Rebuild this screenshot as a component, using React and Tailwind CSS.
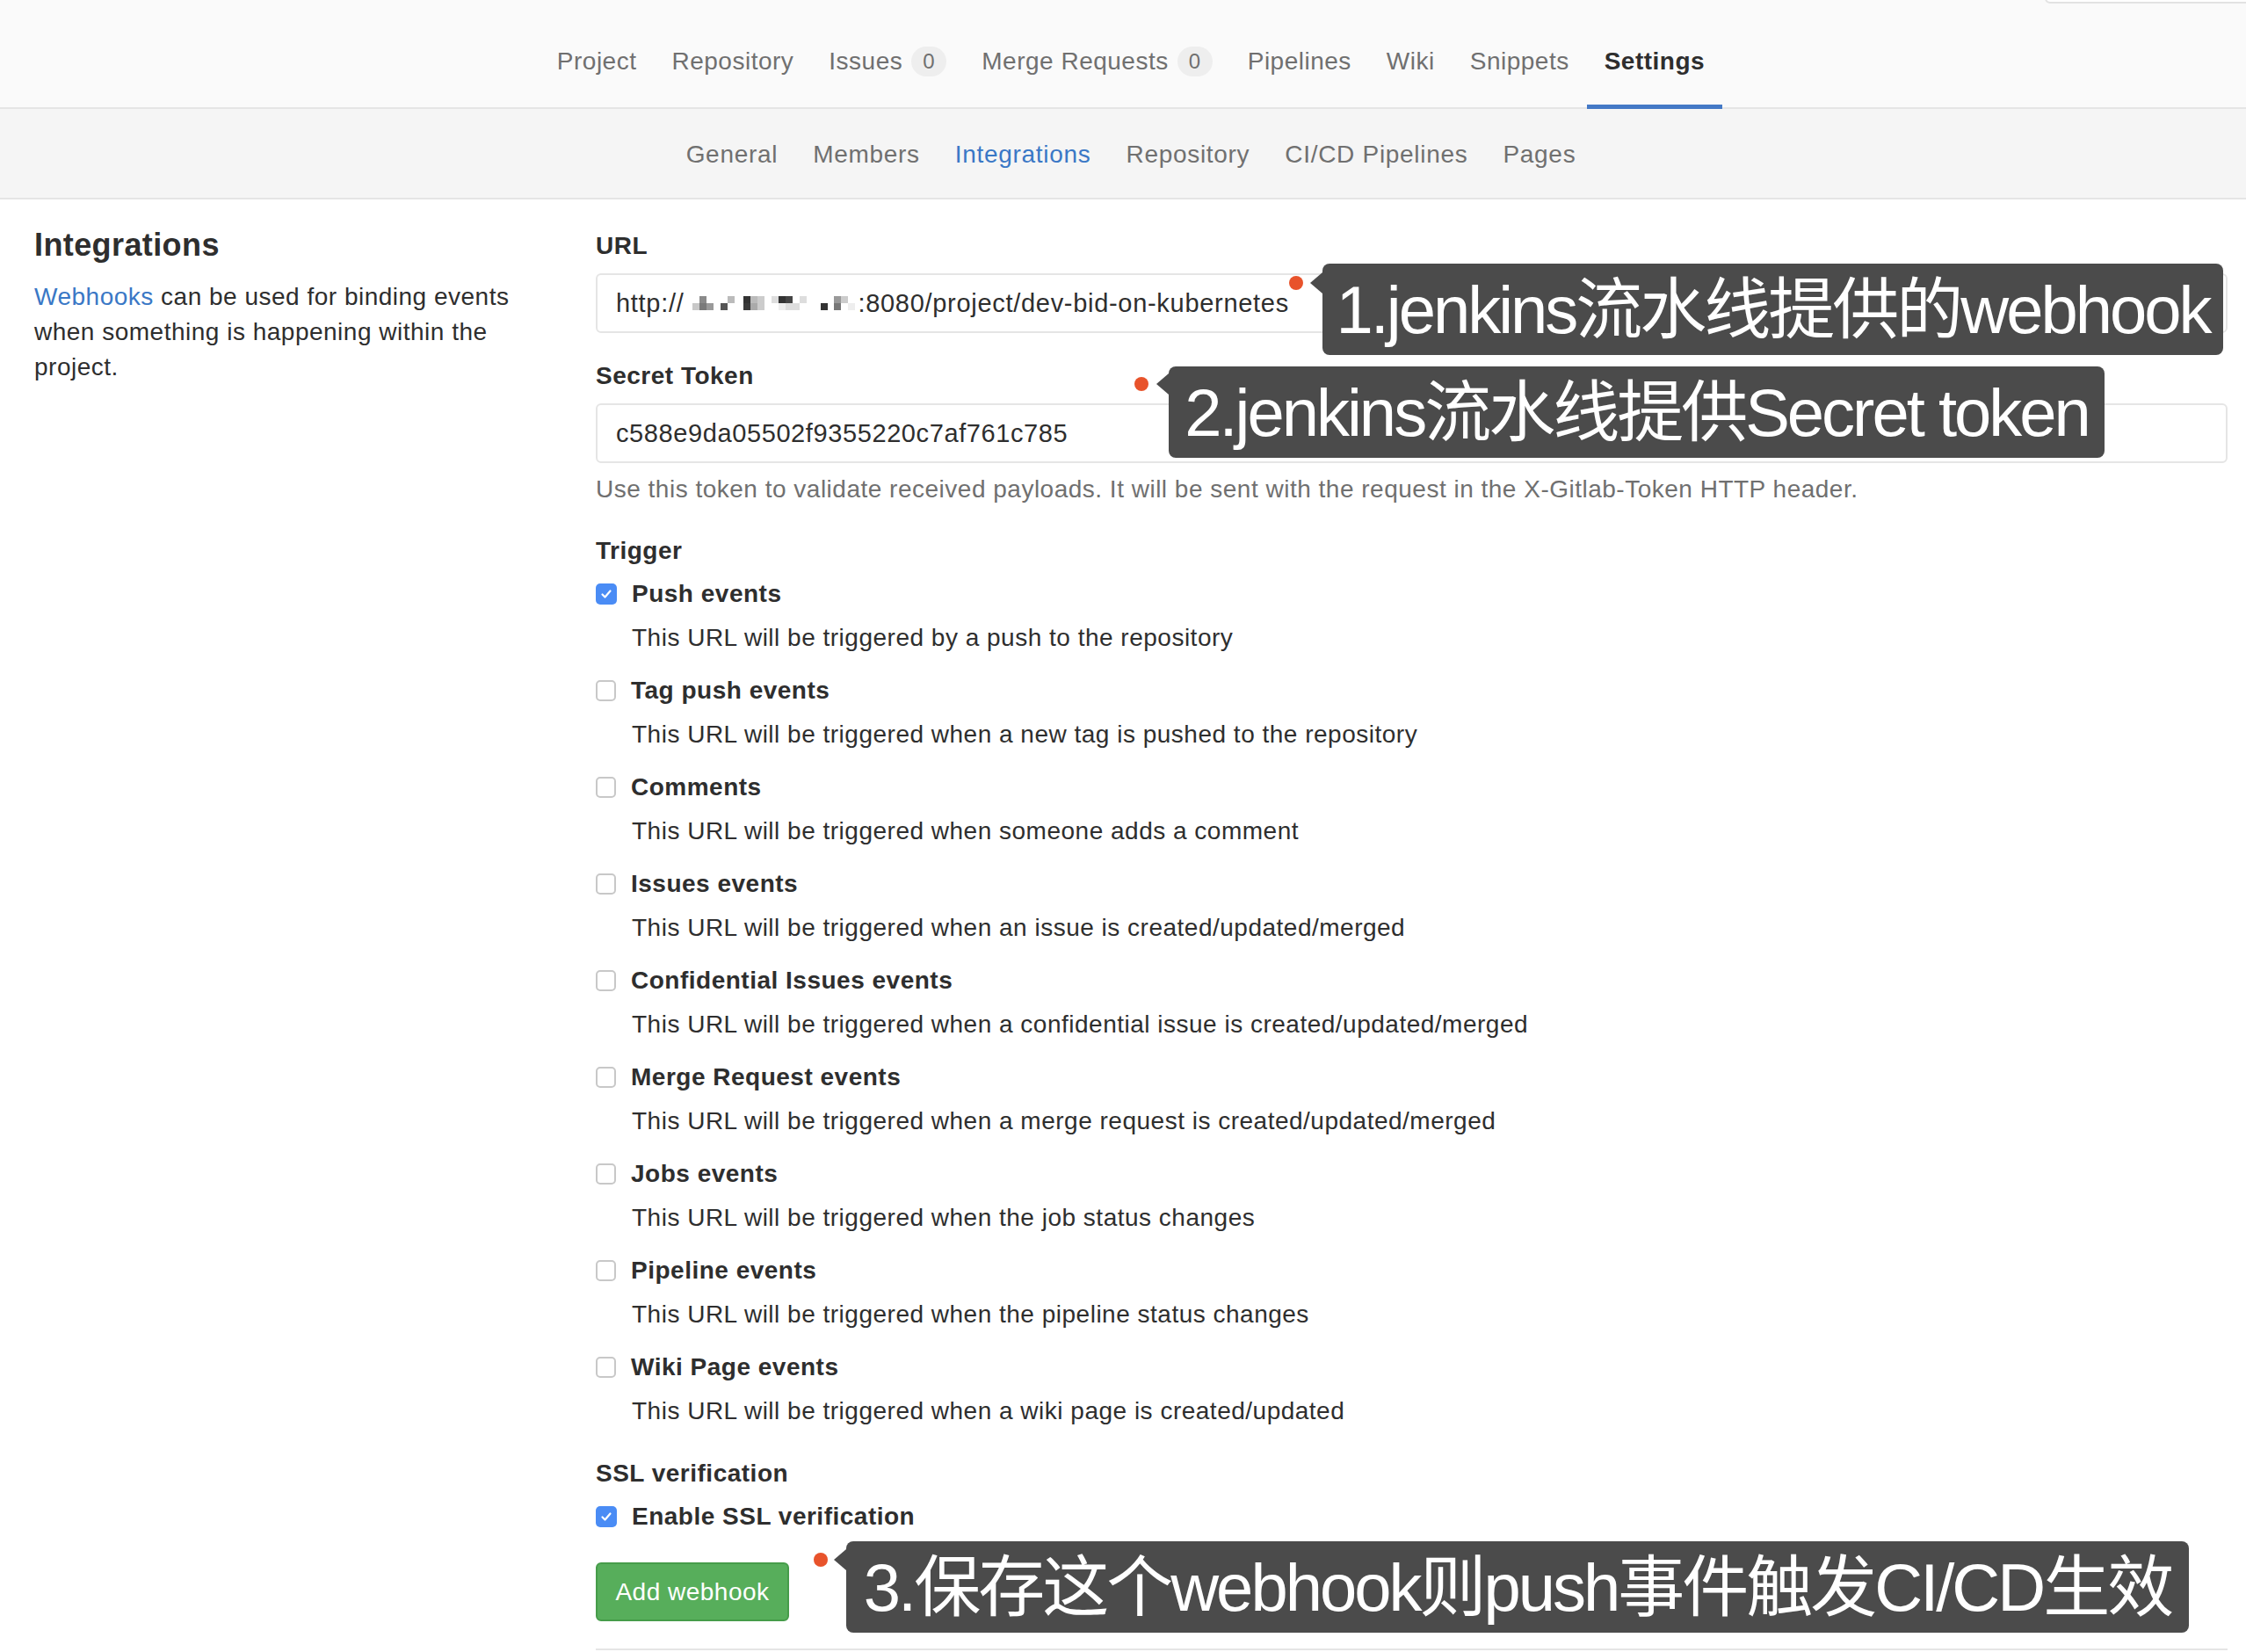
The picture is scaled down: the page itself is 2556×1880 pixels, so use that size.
import React from "react";

const topNav = [
  { t: "Project" },
  { t: "Repository" },
  { t: "Issues", b: "0" },
  { t: "Merge Requests", b: "0" },
  { t: "Pipelines" },
  { t: "Wiki" },
  { t: "Snippets" },
  { t: "Settings", active: true },
];

const subNav = [
  { t: "General" },
  { t: "Members" },
  { t: "Integrations", active: true },
  { t: "Repository" },
  { t: "CI/CD Pipelines" },
  { t: "Pages" },
];

const triggers = [
  { t: "Push events", d: "This URL will be triggered by a push to the repository", c: true },
  { t: "Tag push events", d: "This URL will be triggered when a new tag is pushed to the repository" },
  { t: "Comments", d: "This URL will be triggered when someone adds a comment" },
  { t: "Issues events", d: "This URL will be triggered when an issue is created/updated/merged" },
  { t: "Confidential Issues events", d: "This URL will be triggered when a confidential issue is created/updated/merged" },
  { t: "Merge Request events", d: "This URL will be triggered when a merge request is created/updated/merged" },
  { t: "Jobs events", d: "This URL will be triggered when the job status changes" },
  { t: "Pipeline events", d: "This URL will be triggered when the pipeline status changes" },
  { t: "Wiki Page events", d: "This URL will be triggered when a wiki page is created/updated" },
];

const pixels = [
  [0, 1, "#c8c8c8"], [8, 0, "#8a8a8a"], [8, 1, "#7a7a7a"], [16, 1, "#9a9a9a"],
  [32, 1, "#555"], [40, 0, "#bbb"], [58, 0, "#333"], [58, 1, "#3a3a3a"],
  [66, 0, "#bbb"], [66, 1, "#aaa"], [74, 0, "#ccc"], [74, 1, "#ccc"],
  [90, 0, "#ddd"], [98, 0, "#333"], [106, 0, "#444"], [98, 1, "#eee"],
  [106, 1, "#ddd"], [114, 1, "#ddd"], [122, 0, "#ddd"], [146, 1, "#333"],
  [161, 0, "#999"], [161, 1, "#777"], [169, 0, "#ccc"], [177, 1, "#eee"],
];

function Checkbox({ checked }) {
  if (checked) {
    return (
      <span className="flex h-[24px] w-[24px] shrink-0 items-center justify-center rounded-[5px] bg-[#4a8cf5]">
        <svg width="16" height="16" viewBox="0 0 16 16" fill="none">
          <path d="M3.5 8.5 L6.5 11.5 L12.5 4.5" stroke="white" strokeWidth="2.2" strokeLinecap="round" strokeLinejoin="round" />
        </svg>
      </span>
    );
  }
  return <span className="block h-[24px] w-[23px] shrink-0 rounded-[5px] border-2 border-[#c8c8c8] bg-white" />;
}

function Annotation({ left, top, width, dotLeft, dotTop, triTop, text }) {
  return (
    <div className="absolute" style={{ left, top }}>
      <span className="absolute h-[16px] w-[16px] rounded-full bg-[#e8532b]" style={{ left: dotLeft, top: dotTop }} />
      <div
        className="relative flex h-[104px] items-center justify-center rounded-[8px] bg-[#4b4b4b] font-['Liberation_Sans','Noto_Sans_CJK_SC',sans-serif] text-[76px] leading-[104px] font-normal tracking-[-3px] whitespace-nowrap text-white"
        style={{ width }}
      >
        <span className="absolute left-[-14px] h-0 w-0 border-y-[12px] border-r-[14px] border-y-transparent border-r-[#4b4b4b]" style={{ top: triTop }} />
        <span className="pt-[2px]">{text}</span>
      </div>
    </div>
  );
}

export default function App() {
  return (
    <div className="relative h-[1880px] w-[2556px] overflow-hidden bg-white font-['Liberation_Sans','Noto_Sans_CJK_SC',sans-serif] text-[28px] leading-[40px] tracking-[0.5px] text-[#2e2e2e]">
      {/* top nav */}
      <div className="relative flex h-[124px] justify-center border-b-2 border-[#e5e5e5] bg-[#fafafa] pl-[18px]">
        <div className="absolute left-[2327px] top-[-40px] h-[44px] w-[300px] rounded-[6px] border-2 border-[#e2e2e2] bg-white" />
        {topNav.map((n) => (
          <div key={n.t} className="relative flex h-[122px] items-start px-[20px] pt-[50px]">
            <span className={n.active ? "font-bold text-[#2e2e2e]" : "text-[#707070]"}>{n.t}</span>
            {n.b && (
              <span className="ml-[10px] mt-[3px] flex h-[34px] w-[40px] items-center justify-center rounded-full bg-[#eeeeee] text-[24px] text-[#707070]">
                {n.b}
              </span>
            )}
            {n.active && <span className="absolute inset-x-0 bottom-[-2px] h-[5px] bg-[#4479c6]" />}
          </div>
        ))}
      </div>

      {/* sub nav */}
      <div className="flex h-[103px] items-center justify-center border-b-2 border-[#e5e5e5] bg-[#f5f5f5] pl-[18px] pt-[3px]">
        {subNav.map((n) => (
          <div key={n.t} className={"px-[20px] tracking-[0.7px] " + (n.active ? "text-[#3a78c6]" : "text-[#707070]")}>
            {n.t}
          </div>
        ))}
      </div>

      {/* content */}
      <div className="flex pt-[30px]">
        <div className="w-[678px] shrink-0 pl-[39px] pr-[59px]">
          <h4 className="text-[36px] font-semibold leading-[44px] tracking-[0.4px] text-[#2e2e2e]">Integrations</h4>
          <p className="mt-[17px]">
            <span className="text-[#3a78c6]">Webhooks</span> can be used for binding events when something is happening within the project.
          </p>
        </div>

        <div className="flex-1 pr-[21px] pt-[3px]">
          <div className="font-semibold">URL</div>
          <div className="mt-[11px] flex h-[68px] items-center rounded-[6px] border-2 border-[#e5e5e5] px-[21px] text-[29px] tracking-[0.7px] whitespace-nowrap">
            <span>http://</span>
            <svg width="190" height="16" viewBox="0 0 190 16" className="ml-[10px] mr-[-2px] shrink-0">
              {pixels.map(([x, r, c], i) => (
                <rect key={i} x={x} y={r * 8} width="8" height="8" fill={c} />
              ))}
            </svg>
            <span>:8080/project/dev-bid-on-kubernetes</span>
          </div>

          <div className="mt-[29px] font-semibold">Secret Token</div>
          <div className="mt-[11px] flex h-[68px] items-center rounded-[6px] border-2 border-[#e5e5e5] px-[21px] text-[29px] tracking-[0.6px]">
            c588e9da05502f9355220c7af761c785
          </div>
          <p className="mt-[10px] text-[#707070]">
            Use this token to validate received payloads. It will be sent with the request in the X-Gitlab-Token HTTP header.
          </p>

          <div className="mt-[30px] font-semibold">Trigger</div>
          <div className="mt-[9px] flex flex-col gap-[20px]">
            {triggers.map((it) => (
              <div key={it.t}>
                <label className="flex items-center gap-[17px]">
                  <Checkbox checked={it.c} />
                  <span className="font-bold">{it.t}</span>
                </label>
                <p className="mt-[10px] pl-[41px]">{it.d}</p>
              </div>
            ))}
          </div>

          <div className="mt-[31px] font-semibold">SSL verification</div>
          <label className="mt-[9px] flex items-center gap-[17px]">
            <Checkbox checked />
            <span className="font-bold">Enable SSL verification</span>
          </label>

          <button className="mt-[32px] flex h-[67px] w-[220px] items-center justify-center rounded-[6px] border-2 border-[#469c4a] bg-[#57ae5b] text-white">
            Add webhook
          </button>

          <div className="mt-[31px] border-t-2 border-[#e5e5e5]" />
        </div>
      </div>

      <Annotation left={1505} top={300} width={1025} dotLeft={-38} dotTop={14} triTop={10} text="1.jenkins流水线提供的webhook" />
      <Annotation left={1330} top={417} width={1065} dotLeft={-39} dotTop={12} triTop={8} text="2.jenkins流水线提供Secret token" />
      <Annotation left={963} top={1754} width={1528} dotLeft={-37} dotTop={13} triTop={9} text="3.保存这个webhook则push事件触发CI/CD生效" />
    </div>
  );
}
